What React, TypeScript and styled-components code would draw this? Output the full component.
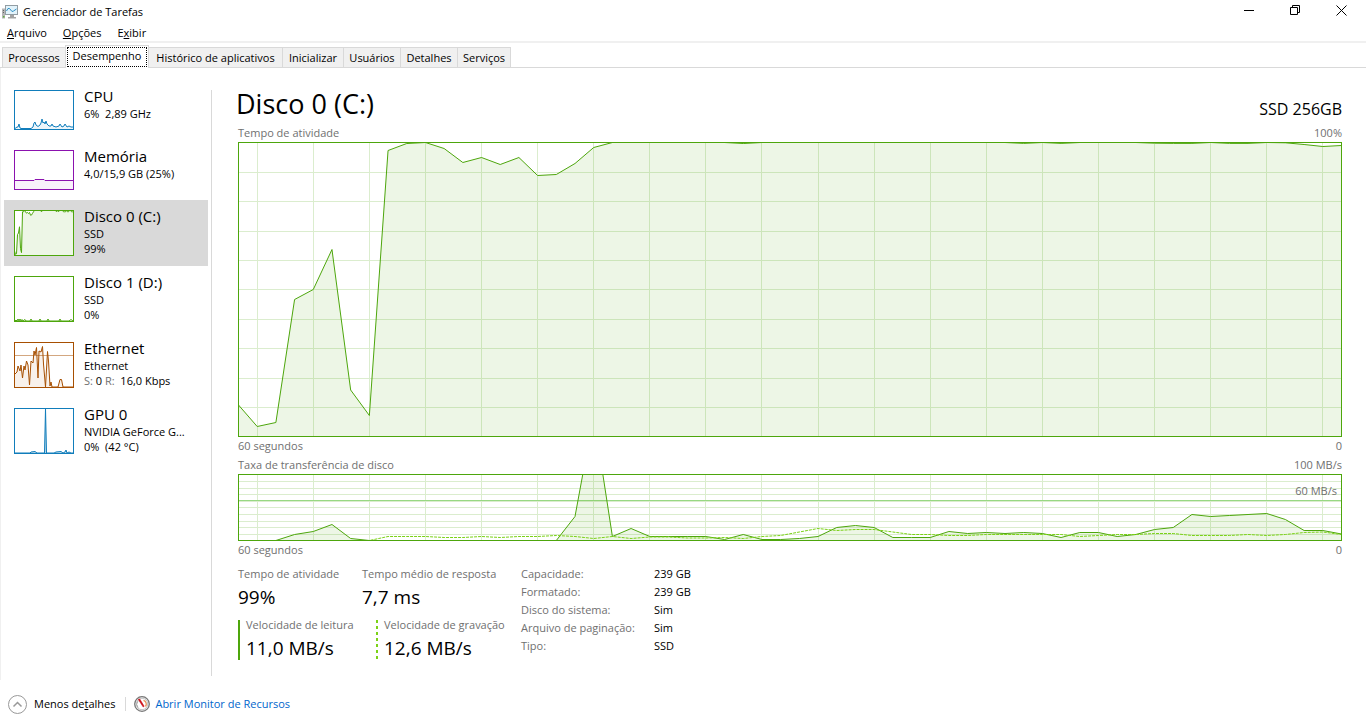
import React from "react";
import styled, { createGlobalStyle } from "styled-components";

const GREEN = "#4da60c";
const LINE = "#d9d9d9";

const GlobalStyle = createGlobalStyle`
  * { box-sizing: border-box; }
  body {
    margin: 0;
    background: #fff;
    color: #000;
    font-family: "Open Sans", "Noto Sans", sans-serif;
    font-size: 11px;
    line-height: 18px;
  }
  button { font: inherit; color: inherit; border: 0; background: none; padding: 0; margin: 0; text-align: left; white-space: nowrap; }
  h1, h2, p, dl, dd, dt { margin: 0; font-weight: 400; }
  svg { display: block; }
`;

const Window = styled.div`
  display: flex;
  flex-direction: column;
  min-height: 100vh;
`;

const TitleBar = styled.header`
  display: flex;
  align-items: flex-start;
  height: 24px;
  padding: 0 2px;
`;

const AppName = styled.div`
  display: flex;
  align-items: center;
  gap: 5px;
  flex: 1;
  padding-top: 3px;
`;

const WindowButton = styled.button`
  display: flex;
  justify-content: center;
  align-items: center;
  width: 46px;
  height: 21px;
`;

const MenuBar = styled.nav`
  display: flex;
  gap: 16px;
  height: 19px;
  padding-left: 7px;
  border-bottom: 2px solid #f0f0f0;
`;

const TabStrip = styled.div`
  display: flex;
  align-items: flex-end;
  height: 25px;
  padding-left: 2px;
  border-bottom: 1px solid ${LINE};
`;

const Tab = styled.button<{ $width: number; $active?: boolean }>`
  min-width: ${(p) => p.$width}px;
  height: ${(p) => (p.$active ? 23 : 20)}px;
  margin-bottom: ${(p) => (p.$active ? -1 : 0)}px;
  padding: ${(p) => (p.$active ? "1px" : "0")};
  border: 1px solid ${LINE};
  border-right-width: ${(p) => (p.$active ? 1 : 0)}px;
  border-bottom: 0;
  background: ${(p) => (p.$active ? "#fff" : "#f0f0f0")};
  line-height: 19px;
  text-align: center;
  &:last-child { border-right-width: 1px; }
  &[aria-selected="true"] + & { border-left-width: 0; }
`;

const FocusFrame = styled.span`
  display: block;
  height: 20px;
  border: 1px dotted #000;
  line-height: 16px;
`;

const Body = styled.div`
  display: flex;
  flex: 1;
`;

const Sidebar = styled.aside`
  display: flex;
  flex-direction: column;
  flex: 0 0 212px;
  padding: 12px 3px 4px 3px;
  border-left: 1px solid #f0f0f0;
  background: linear-gradient(${LINE}, ${LINE}) right 0 top 22px / 1px calc(100% - 26px) no-repeat;
`;

const Resource = styled.button<{ $selected?: boolean }>`
  display: flex;
  align-items: flex-start;
  gap: 10px;
  width: 204px;
  padding: 7px 10px 0;
  background: ${(p) => (p.$selected ? "#d9d9d9" : "transparent")};
`;

const Thumb = styled.svg`
  flex: none;
  margin: 3px 0 10px;
`;

const ResourceText = styled.span`
  display: flex;
  flex-direction: column;
  line-height: 15px;
`;

const ResourceName = styled.span`
  font-size: 15px;
  line-height: 19px;
`;

const Muted = styled.span`
  color: #707070;
`;

const Panel = styled.main`
  display: flex;
  flex-direction: column;
  flex: 1;
  min-width: 0;
  padding: 22px 24px 18px 26px;
`;

const PanelHeader = styled.div`
  display: flex;
  justify-content: space-between;
  height: 34px;
`;

const Title = styled.h1`
  font-size: 27px;
  line-height: 28px;
  margin-left: -2px;
`;

const Model = styled.p`
  font-size: 16px;
  line-height: 38px;
`;

const Captions = styled.div`
  display: flex;
  flex-direction: column;
  gap: 1px;
`;

const Caption = styled.div`
  display: flex;
  justify-content: space-between;
  color: #707070;
`;

const ActivityChart = styled.svg`
  flex: 1 1 0;
  width: 100%;
  min-height: 160px;
`;

const TransferFrame = styled.div`
  position: relative;
`;

const TransferChart = styled.svg`
  width: 100%;
  height: 67px;
`;

const ScaleLabel = styled.span`
  position: absolute;
  top: 8px;
  right: 5px;
  color: #707070;
`;

const Summary = styled.div`
  display: flex;
  margin-top: 6px;
`;

const Figures = styled.div`
  display: flex;
  flex-direction: column;
  gap: 5px;
  width: 283px;
`;

const FigureRow = styled.dl`
  display: flex;
`;

const Figure = styled.div<{ $width: number; $mark?: "solid" | "dashed" }>`
  flex: 0 0 ${(p) => p.$width}px;
  padding-left: ${(p) => (p.$mark ? 8 : 0)}px;
  white-space: nowrap;
  background: ${(p) =>
    p.$mark === "solid"
      ? `linear-gradient(${GREEN}, ${GREEN}) 0 4px / 2px 40px no-repeat`
      : p.$mark === "dashed"
        ? "repeating-linear-gradient(#7bd217 0 3px, transparent 3px 6px) 0 4px / 2px 40px no-repeat"
        : "none"};
  dt { color: #707070; }
  dd { font-size: 19px; line-height: 28px; }
`;

const Details = styled.dl`
  display: grid;
  grid-template-columns: 133px auto;
  align-content: start;
  dt { color: #707070; }
`;

const Footer = styled.footer`
  display: flex;
  align-items: center;
  height: 48px;
  padding: 0 8px;
`;

const LessDetails = styled.button`
  display: flex;
  align-items: center;
  gap: 7px;
  padding-right: 10px;
`;

const MonitorLink = styled.a`
  display: flex;
  align-items: center;
  gap: 5px;
  padding-left: 9px;
  background: linear-gradient(${LINE}, ${LINE}) left center / 1px 14px no-repeat;
  color: #0066cc;
  text-decoration: none;
`;

type Series = number[];

/* Distance from the top of the plot, one sample each, oldest first. */
const activity: Series = [
  263, 284.5, 280.5, 157.5, 147.5, 107.5, 248, 273.5, 8.5, 1.5, 0.5, 6.5, 20.5, 15.5, 22.5, 15.5, 33.5, 32.5, 21.5, 5.5,
  0.5, 0.5, 0.5, 0.5, 0.5, 0.5, 0.5, 1.5, 0.5, 0.5, 0.5, 0.5, 0.5, 0.5, 0.5, 0.5, 0.5, 0.5, 0.5, 0.5,
  0.5, 0.5, 1.4, 0.5, 1.4, 0.5, 0.5, 0.5, 0.5, 1.2, 1.4, 1.4, 0.5, 1.4, 1.4, 0.5, 0.8, 2.5, 4.5, 3.5,
];

const reads: Series = [
  66.5, 66.5, 66.5, 60.5, 57.5, 50.5, 64.5, 66.5, 66.5, 66.5, 66.5, 66.5, 66.5, 66.5, 66.5, 66.5, 66.5, 66.5, 42.5, -59,
  62.5, 54.5, 62.5, 62.5, 62.5, 62.5, 65.5, 60.5, 65.5, 65.5, 64.5, 62.5, 53.5, 51.5, 53.5, 63.5, 63.5, 63.5, 57.5, 59.5,
  58.5, 59.5, 58.5, 59.5, 63.5, 58.5, 58.5, 62.5, 60.5, 55.5, 53.5, 40.5, 42.5, 41.5, 40.5, 39.5, 45.5, 56.5, 56.5, 60,
];

const writes: Series = [
  66.5, 66.5, 66.5, 66.5, 66.5, 66.5, 66.5, 66.5, 62.5, 62.5, 62.5, 63.5, 63.5, 62.5, 63.5, 62.5, 62.5, 61.5, 62.5, 64.5,
  62.5, 64.5, 63, 63, 64, 64, 63.5, 64.5, 62.5, 61.5, 58, 54.5, 56.5, 55.5, 55.5, 58, 60.5, 60.5, 61.5, 61.5,
  60.5, 60.5, 60.5, 60.5, 60.5, 62.5, 61.5, 60.5, 60.5, 59.5, 59.5, 61.5, 61.5, 61.5, 60.5, 61.5, 60.5, 58.5, 58, 60.5,
];

const toPoints = (series: Series, width: number) =>
  series.map((y, i) => `${((i * (width - 1)) / 59 + 0.5).toFixed(2)},${y.toFixed(2)}`).join(" ");

/* Scaled down for the sidebar, keeping small dips visible under the frame. */
const miniActivity = activity.map((y) => (y > 1 ? Math.max((y * 46) / 295, 1.8) : 0.5));

function Grid({ width, height }: { width: number; height: number }) {
  const columns = Array.from({ length: 20 }, (_, i) => Math.floor(((1 + 3 * i) * (width - 1)) / 59 + 0.5) + 0.5);
  const rows = Array.from({ length: 9 }, (_, i) => Math.ceil(((i + 1) * (height - 1)) / 10) + 0.5);
  return (
    <g stroke="#dbedce">
      {columns.map((x) => <line key={x} x1={x} x2={x} y1={1} y2={height - 1} />)}
      {rows.map((y) => <line key={y} x1={1} x2={width - 1} y1={y} y2={y} />)}
    </g>
  );
}

function Area({ points, width, height, color = GREEN, opacity = 0.1 }: { points: string; width: number; height: number; color?: string; opacity?: number }) {
  return (
    <>
      <polygon points={`0.5,${height} ${points} ${width - 0.5},${height}`} fill={color} fillOpacity={opacity} />
      <polyline points={points} fill="none" stroke={color} />
    </>
  );
}

function MiniChart({ height, color, points, fill = 0.08, level }: { height: number; color: string; points: string; fill?: number; level?: number }) {
  return (
    <Thumb width="60" height={height} viewBox={`0 0 60 ${height}`} aria-hidden="true">
      <rect width="60" height={height} fill="#fff" />
      {level && <path d={`M1 ${level}.5H59`} stroke={color} strokeOpacity={0.5} />}
      <Area points={points} width={60} height={height} color={color} opacity={fill} />
      <rect x=".5" y=".5" width="59" height={height - 1} fill="none" stroke={color} />
    </Thumb>
  );
}

const cpuPoints = "1,38.5 3,37 4,37 5,34 6,38 7,38.5 17,38.5 19,37 20,33 21,32 22,35 24,36.5 26,35 27,33 28,29 29,33 30,32 31,34 32,31 33,34 35,36 37,36 38,34 39,36 42,37 45,36 46,34 48,37 50,36 51,34 53,37 55,36 57,37 59,37";
const memoryPoints = "0.5,30.5 20,30.5 21,29.5 30,29.5 31,30.5 59,30.5";
const diskOnePoints = "1,45 2,44 3,45 4,43 5,45 6,43 7,45 8,43.5 9,45 11,43.5 12,45 16,45 17,43 18,45 25,45 26,43 27,45 33,45 34,43 35,45 45,45 46,43 47,45 55,45 57,43.5 59,45";
const ethernetPoints = "1,32 3,30 4,24 6,29 7,23 8.5,36 10,24 11,28 12.5,19 14,23 15.5,43 17,19 19,21 20,9 21,13 22.5,5.5 24,36 25,9 27,10 28.5,4.5 29.5,22 31.5,45 33.5,9.5 34.5,19 36,44 37,40 38,45 44,45 46,37.5 47.5,37.5 49,45 59,45";
const gpuPoints = "1,45 16,45 17,44 21,43.5 23,45 30.5,45 31.5,1 32.5,45 40,45 42,44 47,43.5 49,45 51,44 52,42 53,45 55,44 57,45 59,45";

const tabs = [
  { label: "Processos", width: 63 },
  { label: "Desempenho", width: 84 },
  { label: "Histórico de aplicativos", width: 133 },
  { label: "Inicializar", width: 61 },
  { label: "Usuários", width: 57 },
  { label: "Detalhes", width: 57 },
  { label: "Serviços", width: 54 },
];

const diskDetails = [
  ["Capacidade:", "239 GB"],
  ["Formatado:", "239 GB"],
  ["Disco do sistema:", "Sim"],
  ["Arquivo de paginação:", "Sim"],
  ["Tipo:", "SSD"],
];

const AppIcon = () => (
  <svg width="16" height="16" viewBox="0 0 16 16" aria-hidden="true">
    <path d="M0 4.500h3v10H0z" fill="#b5b5b5" />
    <path d="M1 6.500h1M1 8.500h1" stroke="#666" />
    <path d="M1 12h1.500v1.500H1z" fill="#5fae3c" />
    <rect x="3.500" y="1.500" width="12" height="9" fill="#e2f3fb" stroke="#929da3" />
    <path d="M4.500 7l1.500-2.500h1.500L10 7.500l1.500-.5 3-2" fill="none" stroke="#2d8fc4" />
    <path d="M8 11h4v2h2v1.500H6V13h2z" fill="#a3a3a3" />
  </svg>
);

const GaugeIcon = () => (
  <svg width="16" height="16" viewBox="0 0 16 16" aria-hidden="true">
    <circle cx="8" cy="8" r="7.300" fill="#f2f2f2" stroke="#777" strokeWidth="1.300" />
    <circle cx="8" cy="8" r="5.700" fill="#fff" stroke="#c5c5c5" />
    <path d="M4 11.500A5 5 0 0 1 4 5" fill="none" stroke="#a8a8a8" />
    <path d="M9.500 4.300A4 4 0 0 1 11.500 10.500" fill="none" stroke="#e69357" strokeWidth="1.300" />
    <path d="M4.200 3.400l1.600-.4 4.400 7.300-1 .7z" fill="#d60d16" stroke="#c00d14" strokeWidth=".5" />
  </svg>
);

export default function App() {
  return (
    <Window>
      <GlobalStyle />
      <TitleBar>
        <AppName><AppIcon />Gerenciador de Tarefas</AppName>
        <WindowButton aria-label="Minimizar">
          <svg width="11" height="11"><path d="M0 5.500H10" stroke="#000" /></svg>
        </WindowButton>
        <WindowButton aria-label="Restaurar">
          <svg width="11" height="11" fill="none" stroke="#000"><path d="M.5 2.500h7v7h-7zM2.500 2.500v-2h7v7h-2" /></svg>
        </WindowButton>
        <WindowButton aria-label="Fechar">
          <svg width="11" height="11" stroke="#000"><path d="M.5.5l10 10M10.500.5l-10 10" /></svg>
        </WindowButton>
      </TitleBar>
      <MenuBar>
        <button><u>A</u>rquivo</button>
        <button><u>O</u>pções</button>
        <button>E<u>x</u>ibir</button>
      </MenuBar>
      <TabStrip role="tablist">
        {tabs.map(({ label, width }) => {
          const active = label === "Desempenho";
          return (
            <Tab key={label} role="tab" aria-selected={active} $width={width} $active={active}>
              {active ? <FocusFrame>{label}</FocusFrame> : label}
            </Tab>
          );
        })}
      </TabStrip>
      <Body>
        <Sidebar>
          <Resource>
            <MiniChart height={40} color="#117dbb" points={cpuPoints} />
            <ResourceText><ResourceName>CPU</ResourceName><span>6%&nbsp; 2,89 GHz</span></ResourceText>
          </Resource>
          <Resource>
            <MiniChart height={40} color="#8b12ae" points={memoryPoints} fill={0.06} />
            <ResourceText><ResourceName>Memória</ResourceName><span>4,0/15,9 GB (25%)</span></ResourceText>
          </Resource>
          <Resource $selected>
            <MiniChart height={46} color={GREEN} points={toPoints(miniActivity, 60)} fill={0.1} />
            <ResourceText><ResourceName>Disco 0 (C:)</ResourceName><span>SSD</span><span>99%</span></ResourceText>
          </Resource>
          <Resource>
            <MiniChart height={46} color={GREEN} points={diskOnePoints} />
            <ResourceText><ResourceName>Disco 1 (D:)</ResourceName><span>SSD</span><span>0%</span></ResourceText>
          </Resource>
          <Resource>
            <MiniChart height={46} color="#a74f01" points={ethernetPoints} level={13} />
            <ResourceText>
              <ResourceName>Ethernet</ResourceName>
              <span>Ethernet</span>
              <span><Muted>S:</Muted> 0 <Muted>R:</Muted>&nbsp; 16,0 Kbps</span>
            </ResourceText>
          </Resource>
          <Resource>
            <MiniChart height={46} color="#117dbb" points={gpuPoints} fill={0.3} />
            <ResourceText><ResourceName>GPU 0</ResourceName><span>NVIDIA GeForce G...</span><span>0%&nbsp; (42 °C)</span></ResourceText>
          </Resource>
        </Sidebar>
        <Panel>
          <PanelHeader><Title>Disco 0 (C:)</Title><Model>SSD 256GB</Model></PanelHeader>
          <Caption><span>Tempo de atividade</span><span>100%</span></Caption>
          <ActivityChart viewBox="0 0 1104 295" preserveAspectRatio="none" role="img" aria-label="Tempo de atividade">
            <Grid width={1104} height={295} />
            <Area points={toPoints(activity, 1104)} width={1104} height={295} />
            <rect x=".5" y=".5" width="1103" height="294" fill="none" stroke={GREEN} />
          </ActivityChart>
          <Captions>
            <Caption><span>60 segundos</span><span>0</span></Caption>
            <Caption><span>Taxa de transferência de disco</span><span>100 MB/s</span></Caption>
          </Captions>
          <TransferFrame>
            <TransferChart viewBox="0 0 1104 67" preserveAspectRatio="none" role="img" aria-label="Taxa de transferência de disco">
              <Grid width={1104} height={67} />
              <path d="M1 26.500H1103" stroke="#98d883" />
              <Area points={toPoints(reads, 1104)} width={1104} height={67} />
              <polyline points={toPoints(writes, 1104)} fill="none" stroke="#7bd217" strokeDasharray="3 1" />
              <rect x=".5" y=".5" width="1103" height="66" fill="none" stroke={GREEN} />
            </TransferChart>
            <ScaleLabel>60 MB/s</ScaleLabel>
          </TransferFrame>
          <Caption><span>60 segundos</span><span>0</span></Caption>
          <Summary>
            <Figures>
              <FigureRow>
                <Figure $width={124}><dt>Tempo de atividade</dt><dd>99%</dd></Figure>
                <Figure $width={150}><dt>Tempo médio de resposta</dt><dd>7,7 ms</dd></Figure>
              </FigureRow>
              <FigureRow>
                <Figure $width={138} $mark="solid"><dt>Velocidade de leitura</dt><dd>11,0 MB/s</dd></Figure>
                <Figure $width={140} $mark="dashed"><dt>Velocidade de gravação</dt><dd>12,6 MB/s</dd></Figure>
              </FigureRow>
            </Figures>
            <Details>
              {diskDetails.map(([term, value]) => (
                <React.Fragment key={term}><dt>{term}</dt><dd>{value}</dd></React.Fragment>
              ))}
            </Details>
          </Summary>
        </Panel>
      </Body>
      <Footer>
        <LessDetails>
          <svg width="19" height="19" fill="none" aria-hidden="true">
            <circle cx="9.500" cy="9.500" r="9" stroke="#999" />
            <path d="M5.500 11.500l4-4 4 4" stroke="#999" strokeWidth="1.500" />
          </svg>
          <span>Menos de<u>t</u>alhes</span>
        </LessDetails>
        <MonitorLink href="#monitor"><GaugeIcon />Abrir Monitor de Recursos</MonitorLink>
      </Footer>
    </Window>
  );
}
